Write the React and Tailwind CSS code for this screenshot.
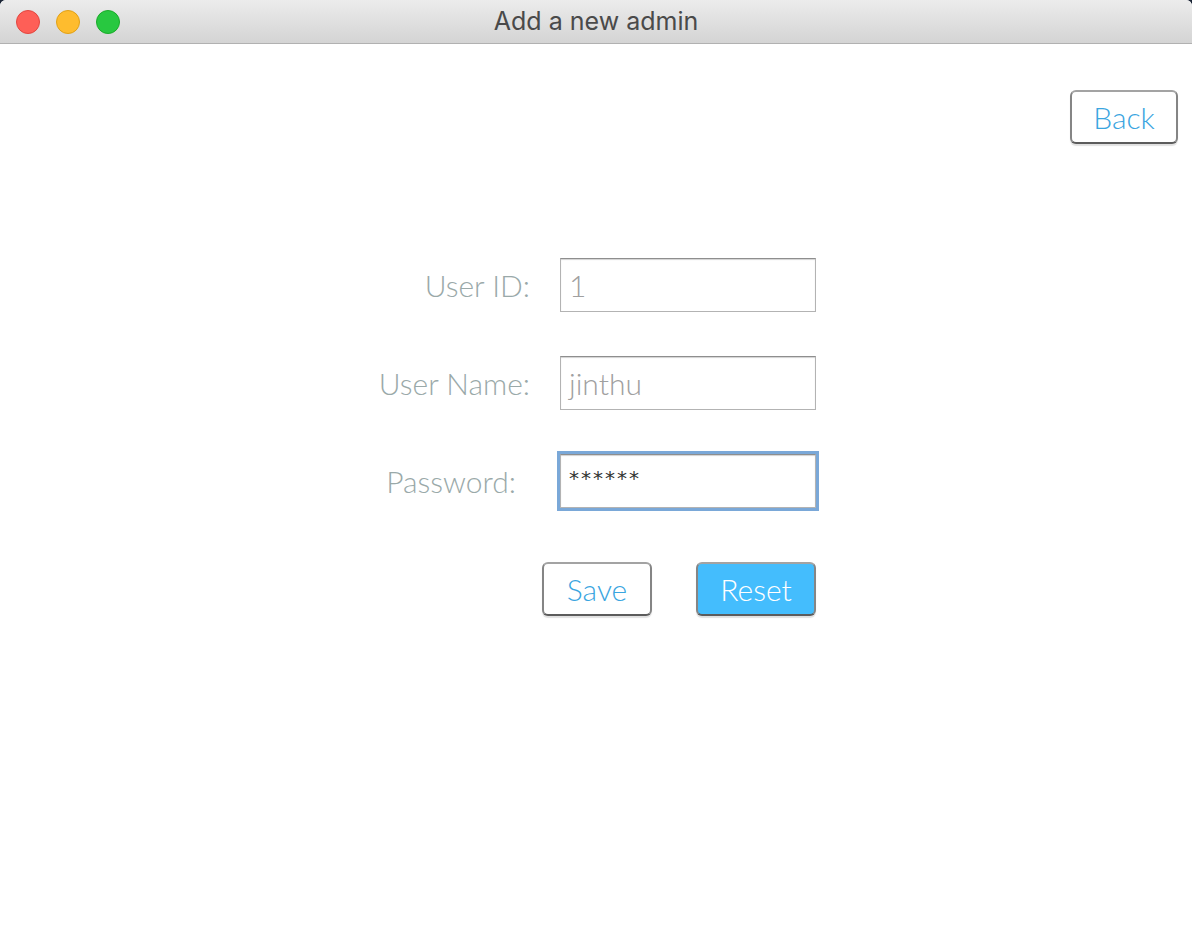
import React from "react";

function Btn({ children, primary, className = "" }) {
  return (
    <button
      className={
        "h-[54px] rounded-[6px] border-[2px] border-t-[#a3a3a3] border-x-[#858585] border-b-[#5c5c5c] shadow-[0_2px_1px_rgba(0,0,0,0.12)] text-[30px] font-light leading-none flex items-center justify-center " +
        (primary ? "bg-[#44bdfd] text-white " : "bg-white text-[#3aa5df] ") +
        className
      }
      style={{ fontFamily: "Lato, 'Open Sans', sans-serif" }}
    >
      {children}
    </button>
  );
}

function Row({ label, value, labelPad = "", focused, password }) {
  return (
    <div className="flex items-center h-[54px]">
      <div
        className={"w-[530px] text-right text-[30px] font-light text-[#9aa9a9] " + labelPad}
        style={{ fontFamily: "Lato, 'Open Sans', sans-serif" }}
      >
        {label}
      </div>
      <div
        className={
          "ml-[30px] w-[256px] h-[54px] bg-white border border-[#b3b3b3] border-t-[#8e8e8e] shadow-[inset_0_1px_1px_rgba(0,0,0,0.18)] flex pl-[8px] " +
          (focused ? "ring-[3px] ring-[#7aa8d8] items-start pt-[8px]" : "items-center")
        }
      >
        {password ? (
          <span
            className="text-[20px] text-[#333] tracking-[2px]"
            style={{ fontFamily: "'DejaVu Sans', sans-serif" }}
          >
            {value}
          </span>
        ) : (
          <span
            className="text-[30px] font-light text-[#a0a0a0]"
            style={{ fontFamily: "Lato, 'Open Sans', sans-serif" }}
          >
            {value}
          </span>
        )}
      </div>
    </div>
  );
}

export default function App() {
  return (
    <div className="w-[1192px] h-[932px] bg-[#1b2536]">
      <div className="w-full h-full bg-white rounded-t-[6px] overflow-hidden flex flex-col">
        <div className="relative h-[44px] shrink-0 bg-gradient-to-b from-[#ececec] to-[#d4d4d4] border-b border-[#b1b1b1] flex items-center justify-center">
          <div className="absolute left-[16px] top-[10px] flex gap-[16px]">
            <div className="w-[24px] h-[24px] rounded-full bg-[#fe5f57] border border-[#e2463f]" />
            <div className="w-[24px] h-[24px] rounded-full bg-[#febc2e] border border-[#e1a116]" />
            <div className="w-[24px] h-[24px] rounded-full bg-[#28c840] border border-[#1aab29]" />
          </div>
          <span
            className="text-[25px] text-[#4a4a4a]"
            style={{ fontFamily: "Inter, 'Noto Sans', sans-serif" }}
          >
            Add a new admin
          </span>
        </div>

        <div className="flex justify-end pr-[14px] pt-[46px]">
          <Btn className="w-[108px]">Back</Btn>
        </div>

        <div className="flex flex-col gap-[44px] mt-[114px]">
          <Row label="User ID:" value="1" />
          <Row label="User Name:" value="jinthu" />
          <Row label="Password:" value="******" labelPad="pr-[14px]" focused password />
        </div>

        <div className="flex gap-[44px] ml-[542px] mt-[54px]">
          <Btn className="w-[110px]">Save</Btn>
          <Btn primary className="w-[120px]">Reset</Btn>
        </div>
      </div>
    </div>
  );
}
